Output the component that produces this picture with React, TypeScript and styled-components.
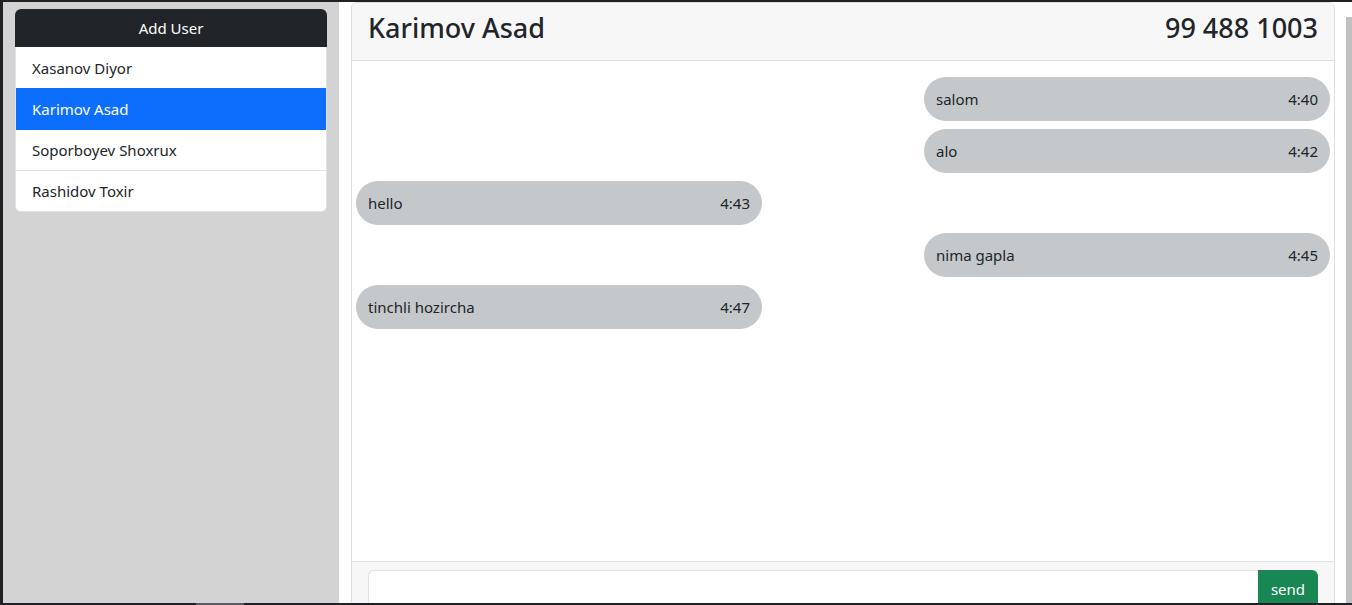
import React from "react";
import styled, { createGlobalStyle } from "styled-components";

const Global = createGlobalStyle`
  html, body { margin: 0; padding: 0; }
  body {
    background: #1f2124;
    overflow: hidden;
    font-family: "Noto Sans", "Segoe UI", sans-serif;
    color: #212529;
  }
  * { box-sizing: border-box; }
`;

const Shell = styled.div`
  display: flex;
  flex-direction: column;
  width: 1352px;
  height: 605px;
  padding: 2px 0 0 3px;
`;

const Workspace = styled.div`
  display: flex;
  height: 601px;
  background: #fff;
  overflow: hidden;
`;

const Sidebar = styled.aside`
  width: 336px;
  flex: none;
  background: #d3d3d3;
  padding: 7px 12px;
  display: flex;
  flex-direction: column;
`;

const AddButton = styled.button`
  height: 38px;
  border: none;
  border-radius: 6px 6px 0 0;
  background: #212529;
  color: #fff;
  font-family: inherit;
  font-size: 15px;
  cursor: pointer;
`;

const UserList = styled.ul`
  list-style: none;
  margin: 0;
  padding: 0;
  background: #fff;
  border: 1px solid #dee2e6;
  border-top: none;
  border-radius: 0 0 6px 6px;
  overflow: hidden;
`;

const UserItem = styled.li<{ $active?: boolean; $line: "none" | "blue" | "gray" }>`
  height: 41px;
  display: flex;
  align-items: center;
  padding: 0 16px;
  font-size: 15px;
  background: ${(p) => (p.$active ? "#0d6efd" : "#fff")};
  color: ${(p) => (p.$active ? "#fff" : "#212529")};
  border-top: ${(p) =>
    p.$line === "none"
      ? "none"
      : `1px solid ${p.$line === "blue" ? "#0d6efd" : "#dee2e6"}`};
`;

const Main = styled.main`
  flex: 1;
  padding: 0 11px 0 12px;
  min-width: 0;
`;

const Card = styled.section`
  border: 1px solid #dfdfdf;
  border-radius: 6px 6px 0 0;
  display: flex;
  flex-direction: column;
  overflow: hidden;
`;

const CardHeader = styled.header`
  background: #f7f7f7;
  border-bottom: 1px solid #dfdfdf;
  padding: 9px 16px 0 16px;
  height: 58px;
  display: flex;
  justify-content: space-between;
  align-items: flex-start;
`;

const HeaderTitle = styled.h3`
  margin: 0;
  font-size: 27px;
  font-weight: 500;
  line-height: 1.2;
`;

const Messages = styled.div`
  height: 500px;
  padding: 16px 4px;
  display: flex;
  flex-direction: column;
  gap: 8px;
`;

const Bubble = styled.div<{ $mine?: boolean }>`
  width: 406px;
  height: 44px;
  align-self: ${(p) => (p.$mine ? "flex-end" : "flex-start")};
  background: #c5c8cb;
  border-radius: 22px;
  padding: 0 12px 0 12px;
  display: flex;
  align-items: center;
  justify-content: space-between;
  font-size: 15px;
`;

const CardFooter = styled.footer`
  background: #f7f7f7;
  border-top: 1px solid #dfdfdf;
  padding: 8px 16px;
  display: flex;
`;

const Input = styled.input`
  flex: 1;
  height: 38px;
  border: 1px solid #dee2e6;
  border-right: none;
  border-radius: 6px 0 0 6px;
  background: #fff;
  outline: none;
`;

const SendButton = styled.button`
  width: 60px;
  height: 38px;
  border: none;
  border-radius: 0 6px 6px 0;
  background: #198754;
  color: #fff;
  font-family: inherit;
  font-size: 15px;
`;

const Rail = styled.div`
  width: 6px;
  flex: none;
  background: #fff;
  padding-top: 15px;
  display: flex;
`;

const RailThumb = styled.div`
  flex: 1;
  background: #c1c1c1;
`;

const BottomBar = styled.div`
  height: 2px;
  display: flex;
  padding-left: 193px;
`;

const BottomThumb = styled.div`
  width: 48px;
  background: #5a5b5e;
`;

const users = [
  "Xasanov Diyor",
  "Karimov Asad",
  "Soporboyev Shoxrux",
  "Rashidov Toxir",
];
const activeUser = "Karimov Asad";

const messages = [
  { text: "salom", time: "4:40", mine: true },
  { text: "alo", time: "4:42", mine: true },
  { text: "hello", time: "4:43", mine: false },
  { text: "nima gapla", time: "4:45", mine: true },
  { text: "tinchli hozircha", time: "4:47", mine: false },
];

export default function App() {
  return (
    <>
      <Global />
      <Shell>
        <Workspace>
          <Sidebar>
            <AddButton>Add User</AddButton>
            <UserList>
              {users.map((u, i) => (
                <UserItem
                  key={u}
                  $active={u === activeUser}
                  $line={
                    i === 0
                      ? "none"
                      : u === activeUser || users[i - 1] === activeUser
                      ? "blue"
                      : "gray"
                  }
                >
                  {u}
                </UserItem>
              ))}
            </UserList>
          </Sidebar>
          <Main>
            <Card>
              <CardHeader>
                <HeaderTitle>Karimov Asad</HeaderTitle>
                <HeaderTitle>99 488 1003</HeaderTitle>
              </CardHeader>
              <Messages>
                {messages.map((m) => (
                  <Bubble key={m.time} $mine={m.mine}>
                    <span>{m.text}</span>
                    <span>{m.time}</span>
                  </Bubble>
                ))}
              </Messages>
              <CardFooter>
                <Input />
                <SendButton>send</SendButton>
              </CardFooter>
            </Card>
          </Main>
          <Rail>
            <RailThumb />
          </Rail>
        </Workspace>
        <BottomBar>
          <BottomThumb />
        </BottomBar>
      </Shell>
    </>
  );
}
